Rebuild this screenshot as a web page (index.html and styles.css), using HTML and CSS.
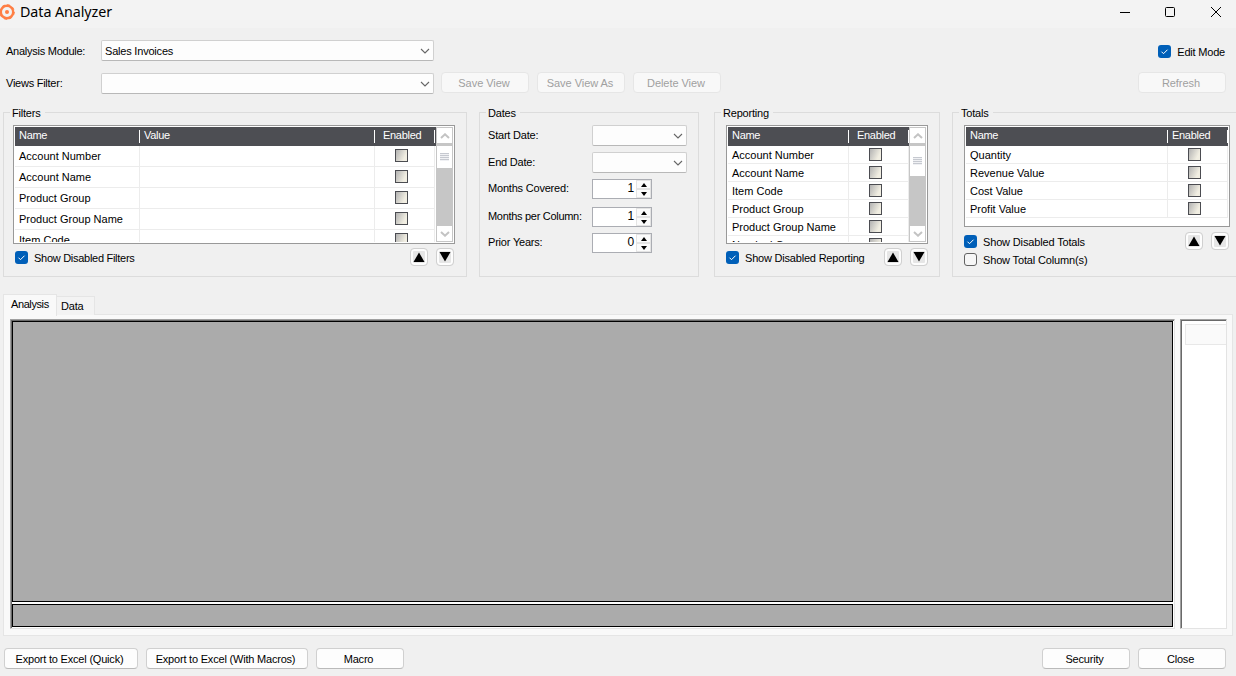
FILE: index.html
```html
<!DOCTYPE html>
<html lang="en">
<head>
    <meta charset="UTF-8">
    <meta name="viewport" content="width=device-width, initial-scale=1.0">
    <title>Data Analyzer</title>
    <link rel="stylesheet" href="styles.css">
</head>
<body>
    <svg class="defs" width="0" height="0">
      <symbol id="chevron" viewBox="0 0 10 6"><path d="M1 1l4 4 4-4" fill="none" stroke="#666" stroke-width="1.1"/></symbol>
      <symbol id="tick" viewBox="0 0 13 13"><path d="M3.5 6.7l2 2 4-4" fill="none" stroke="#fff" stroke-width="1"/></symbol>
      <symbol id="up" viewBox="0 0 12 10"><path d="M6 0.5L11.5 10H0.5z"/></symbol>
      <symbol id="down" viewBox="0 0 12 10"><path d="M0.5 0h11L6 9.5z"/></symbol>
      <symbol id="scroll-up" viewBox="0 0 10 6"><path d="M1 5l4-3.7L9 5" fill="none" stroke="#c3c3c3" stroke-width="2"/></symbol>
      <symbol id="scroll-down" viewBox="0 0 10 6"><path d="M1 1l4 3.7L9 1" fill="none" stroke="#c3c3c3" stroke-width="2"/></symbol>
      <symbol id="spin-up" viewBox="0 0 6 4"><path d="M3 0l3 4H0z"/></symbol>
      <symbol id="spin-down" viewBox="0 0 6 4"><path d="M0 0h6L3 4z"/></symbol>
    </svg>

    <header class="titlebar">
      <svg class="logo" width="15" height="16" viewBox="0 0 15 16">
        <circle cx="7" cy="8" r="6.2" fill="none" stroke="#ff7f45" stroke-width="2.4"/>
        <circle cx="7" cy="8" r="7.3" fill="none" stroke="#ff7f45" stroke-width="1" stroke-dasharray="2.9 2.83"/>
        <circle cx="7" cy="8" r="2" fill="#ff7f45"/>
      </svg>
      <h1>Data Analyzer</h1>
      <svg class="window-buttons" width="104" height="12" viewBox="0 0 104 12" fill="none" stroke="#000" stroke-width="1">
        <path d="M1 6.5h10"/>
        <rect x="46.5" y="1.5" width="9" height="9" rx="1"/>
        <path d="M92 1l10 10M102 1L92 11"/>
      </svg>
    </header>

    <div class="toolbar">
      <div class="toolbar-row">
        <span class="toolbar-label">Analysis Module:</span>
        <div class="combo combo-wide"><span>Sales Invoices</span><svg width="10" height="6"><use href="#chevron"/></svg></div>
        <div class="check edit-mode"><i class="box on"><svg width="13" height="13"><use href="#tick"/></svg></i><span>Edit Mode</span></div>
      </div>
      <div class="toolbar-row second">
        <span class="toolbar-label">Views Filter:</span>
        <div class="combo combo-wide"><span></span><svg width="10" height="6"><use href="#chevron"/></svg></div>
        <div class="view-buttons">
          <button class="btn" disabled>Save View</button>
          <button class="btn" disabled>Save View As</button>
          <button class="btn" disabled>Delete View</button>
        </div>
        <button class="btn refresh" disabled>Refresh</button>
      </div>
    </div>

    <div class="groups">
      <fieldset class="group filters">
        <legend>Filters</legend>
        <div class="grid tall">
          <div class="table">
            <div class="row head"><span>Name</span><span>Value</span><span>Enabled</span></div>
            <div class="row"><span>Account Number</span><span></span><span><i></i></span></div>
            <div class="row"><span>Account Name</span><span></span><span><i></i></span></div>
            <div class="row"><span>Product Group</span><span></span><span><i></i></span></div>
            <div class="row"><span>Product Group Name</span><span></span><span><i></i></span></div>
            <div class="row"><span>Item Code</span><span></span><span><i></i></span></div>
          </div>
          <div class="scrollbar">
            <div class="scroll-btn"><svg width="10" height="6"><use href="#scroll-up"/></svg></div>
            <div class="thumb"><b></b></div>
            <div class="scroll-btn bottom"><svg width="10" height="6"><use href="#scroll-down"/></svg></div>
          </div>
        </div>
        <div class="group-foot">
          <div class="check"><i class="box on"><svg width="13" height="13"><use href="#tick"/></svg></i><span>Show Disabled Filters</span></div>
          <div class="arrows"><button class="arrow"><svg width="12" height="10"><use href="#up"/></svg></button><button class="arrow"><svg width="12" height="10"><use href="#down"/></svg></button></div>
        </div>
      </fieldset>

      <fieldset class="group dates">
        <legend>Dates</legend>
        <div class="date-row"><label>Start Date:</label><div class="combo"><span></span><svg width="10" height="6"><use href="#chevron"/></svg></div></div>
        <div class="date-row end"><label>End Date:</label><div class="combo"><span></span><svg width="10" height="6"><use href="#chevron"/></svg></div></div>
        <div class="date-row covered"><label>Months Covered:</label><div class="spinner"><span>1</span><div class="spin"><b><svg width="6" height="4"><use href="#spin-up"/></svg></b><b><svg width="6" height="4"><use href="#spin-down"/></svg></b></div></div></div>
        <div class="date-row column"><label>Months per Column:</label><div class="spinner"><span>1</span><div class="spin"><b><svg width="6" height="4"><use href="#spin-up"/></svg></b><b><svg width="6" height="4"><use href="#spin-down"/></svg></b></div></div></div>
        <div class="date-row years"><label>Prior Years:</label><div class="spinner"><span>0</span><div class="spin"><b><svg width="6" height="4"><use href="#spin-up"/></svg></b><b><svg width="6" height="4"><use href="#spin-down"/></svg></b></div></div></div>
      </fieldset>

      <fieldset class="group reporting">
        <legend>Reporting</legend>
        <div class="grid tall">
          <div class="table">
            <div class="row head"><span>Name</span><span>Enabled</span></div>
            <div class="row"><span>Account Number</span><span><i></i></span></div>
            <div class="row"><span>Account Name</span><span><i></i></span></div>
            <div class="row"><span>Item Code</span><span><i></i></span></div>
            <div class="row"><span>Product Group</span><span><i></i></span></div>
            <div class="row"><span>Product Group Name</span><span><i></i></span></div>
            <div class="row"><span>Nominal Group</span><span><i></i></span></div>
          </div>
          <div class="scrollbar">
            <div class="scroll-btn"><svg width="10" height="6"><use href="#scroll-up"/></svg></div>
            <div class="thumb"><b></b></div>
            <div class="scroll-btn bottom"><svg width="10" height="6"><use href="#scroll-down"/></svg></div>
          </div>
        </div>
        <div class="group-foot">
          <div class="check"><i class="box on"><svg width="13" height="13"><use href="#tick"/></svg></i><span>Show Disabled Reporting</span></div>
          <div class="arrows"><button class="arrow"><svg width="12" height="10"><use href="#up"/></svg></button><button class="arrow"><svg width="12" height="10"><use href="#down"/></svg></button></div>
        </div>
      </fieldset>

      <fieldset class="group totals">
        <legend>Totals</legend>
        <div class="grid">
          <div class="table">
            <div class="row head"><span>Name</span><span>Enabled</span></div>
            <div class="row"><span>Quantity</span><span><i></i></span></div>
            <div class="row"><span>Revenue Value</span><span><i></i></span></div>
            <div class="row"><span>Cost Value</span><span><i></i></span></div>
            <div class="row"><span>Profit Value</span><span><i></i></span></div>
          </div>
        </div>
        <div class="group-foot">
          <div class="checks">
            <div class="check"><i class="box on"><svg width="13" height="13"><use href="#tick"/></svg></i><span>Show Disabled Totals</span></div>
            <div class="check"><i class="box"></i><span>Show Total Column(s)</span></div>
          </div>
          <div class="arrows"><button class="arrow"><svg width="12" height="10"><use href="#up"/></svg></button><button class="arrow"><svg width="12" height="10"><use href="#down"/></svg></button></div>
        </div>
      </fieldset>
    </div>

    <div class="tabs">
      <div class="tab active">Analysis</div>
      <div class="tab">Data</div>
    </div>
    <div class="panel">
      <div class="sunken analysis">
        <div class="pane main"></div>
        <div class="pane total"></div>
      </div>
      <div class="sunken side"><div class="side-head"></div></div>
    </div>

    <footer class="footer">
      <button class="btn quick">Export to Excel (Quick)</button>
      <button class="btn macros">Export to Excel (With Macros)</button>
      <button class="btn">Macro</button>
      <button class="btn security">Security</button>
      <button class="btn">Close</button>
    </footer>
</body>
</html>
```
FILE: styles.css
```css
* {
  margin: 0;
  padding: 0;
  box-sizing: border-box;
}
body {
  width: 1236px;
  height: 676px;
  overflow: hidden;
  background: #f0f0f0;
  color: #000;
  font-family: "Liberation Sans", Arial, sans-serif;
  font-size: 11px;
  line-height: 13px;
  letter-spacing: -0.2px;
  white-space: nowrap;
}
svg {
  display: block;
  flex: none;
}
.defs {
  position: absolute;
}
.titlebar {
  display: flex;
  align-items: center;
  height: 28px;
  padding: 0 13px 4px 0;
  background: #f3f3f3;
}
.titlebar h1 {
  margin-left: 5px;
  font: 14.3px/20px "Noto Sans", sans-serif;
  letter-spacing: -0.08px;
}
.window-buttons {
  margin-left: auto;
}
/* toolbar */
.toolbar {
  height: 78px;
  padding: 12px 10px 0 6px;
}
.toolbar-row {
  display: flex;
  align-items: center;
  height: 21px;
}
.toolbar-row.second {
  margin-top: 12px;
}
.toolbar-label {
  width: 95px;
  padding-top: 1px;
  letter-spacing: -0.25px;
}
.second .toolbar-label {
  padding: 0 0 1px;
}
.combo {
  display: flex;
  align-items: center;
  justify-content: space-between;
  width: 95px;
  height: 21px;
  padding: 0 3px;
  background: #fdfdfd;
  border: 1px solid #d0d0d0;
  border-bottom-color: #b8b8b8;
  border-radius: 2px;
}
.combo span {
  padding-top: 1px;
}
.combo-wide {
  width: 333px;
}
.check {
  display: flex;
  align-items: center;
  gap: 6px;
  height: 18px;
}
.check span {
  padding-top: 1px;
}
.edit-mode {
  margin-left: auto;
  margin-right: 1px;
  padding-top: 2px;
}
.box {
  width: 13px;
  height: 13px;
  border: 1px solid #626262;
  border-radius: 3px;
  background: #f6f6f6;
}
.box.on {
  border: 0;
  background: #005fb8;
}
.btn {
  width: 88px;
  height: 21px;
  padding: 1px 3px 0 0;
  background: #fdfdfd;
  border: 1px solid #d0d0d0;
  border-bottom-color: #bababa;
  border-radius: 4px;
  font: inherit;
  letter-spacing: -0.2px;
  color: #000;
}
.btn:disabled {
  padding-right: 2px;
  background: #f8f8f8;
  border-color: #e6e6e6;
  color: #a0a0a0;
  letter-spacing: -0.05px;
}
.view-buttons {
  display: flex;
  gap: 8px;
  margin: -2px 0 0 7px;
}
.refresh {
  margin: -2px 0 0 auto;
}
/* group boxes */
.groups {
  display: grid;
  grid-template-columns: 464px 220px 226px 290px;
  column-gap: 12px;
  height: 171px;
  padding-left: 3px;
}
.reporting {
  margin-left: 3px;
  width: 226px;
}
.totals {
  margin-left: 3px;
}
.group {
  min-width: 0;
  height: 171px;
  border: 1px solid #dcdcdc;
  padding: 6px 11px 0 9px;
}
.group legend {
  height: 13px;
  margin-left: -3px;
  padding: 0 4px 0 2px;
  line-height: 15px;
}
.group.reporting {
  padding: 6px 11px 0 11px;
}
.group.totals {
  padding: 6px 8px 0 11px;
}
.reporting legend,
.totals legend {
  margin-left: -5px;
}
.grid {
  display: flex;
  height: 102px;
  padding: 1px;
  border: 1px solid #999;
  background: #fff;
}
.grid.tall {
  height: 119px;
}
.table {
  flex: 1;
  overflow: hidden;
}
.row {
  display: grid;
  grid-template-columns: 125px 235px 60px;
  height: 21px;
}
.row span {
  padding: 4px 0 0 4px;
  border-right: 1px solid #ececec;
  border-bottom: 1px solid #ececec;
  overflow: hidden;
  letter-spacing: 0;
}
.row i {
  display: block;
  width: 13px;
  height: 13px;
  margin: -1px 0 0 16px;
  border: 1px solid #4b4c51;
  background: linear-gradient(115deg, #b2b2b2, #f1eee2 75%);
}
.row.head {
  height: 19px;
  background: #4d4e53;
  color: #fff;
}
.row.head span {
  height: 13px;
  margin-top: 3px;
  padding-top: 0;
  border-bottom: 0;
  border-right-color: #fff;
  line-height: 11px;
  letter-spacing: -0.3px;
}
.row.head span:last-child {
  padding-left: 8px;
}
.reporting .row {
  grid-template-columns: 121px 60px;
  height: 18px;
}
.totals .row {
  grid-template-columns: 202px 60px;
  height: 18px;
}
.reporting .row.head,
.totals .row.head {
  height: 19px;
}
.reporting .row:not(.head) span,
.totals .row:not(.head) span {
  padding-top: 3px;
}
.totals .row.head span:last-child {
  padding-left: 4px;
}
.scrollbar {
  display: flex;
  flex-direction: column;
  width: 17px;
  padding: 1px;
  background: #c6c6c6;
}
.scroll-btn {
  display: flex;
  align-items: center;
  justify-content: center;
  height: 15px;
  background: #fff;
}
.scroll-btn.bottom {
  margin-top: auto;
}
.thumb {
  display: flex;
  align-items: center;
  justify-content: center;
  height: 22px;
  margin-top: 3px;
  background: #fff;
}
.thumb b {
  width: 9px;
  height: 8px;
  background: repeating-linear-gradient(#c6c9d0 0 1px, #f0f1f4 1px 2px);
}
.reporting .thumb {
  height: 30px;
}
.group-foot {
  display: flex;
  justify-content: space-between;
  padding: 4px 1px 0 2px;
}
.filters .check span {
  letter-spacing: -0.28px;
}
.group-foot .check {
  height: 19px;
}
.reporting .group-foot {
  padding-left: 0;
}
.reporting .arrows {
  margin-right: -1px;
}
.totals .group-foot {
  padding: 5px 1px 0 0;
}
.totals .group-foot .check {
  height: 18px;
}
.totals .check span {
  padding-top: 2px;
  letter-spacing: -0.15px;
}
.arrows {
  display: flex;
  gap: 8px;
}
.arrow {
  display: flex;
  align-items: center;
  justify-content: center;
  width: 18px;
  height: 18px;
  border: 1px solid #d0d0d0;
  border-radius: 4px;
  background: #e6e6e6;
  box-shadow: inset 0 0 0 2px #fdfdfd;
}
/* dates */
.group.dates {
  padding-left: 8px;
}
.dates legend {
  margin-left: -2px;
}
.date-row {
  display: grid;
  grid-template-columns: 104px auto;
  height: 27px;
}
.date-row label {
  padding-top: 4px;
}
.date-row.covered label,
.date-row.column label,
.date-row.years label {
  padding-top: 3px;
}
.date-row.covered {
  height: 28px;
}
.date-row.column {
  height: 26px;
}
.date-row.column label {
  letter-spacing: -0.3px;
}
.spinner {
  display: flex;
  justify-content: flex-end;
  width: 60px;
  height: 20px;
  border: 1px solid #abadb3;
  background: #fff;
}
.spinner > span {
  margin-right: 2px;
  padding-top: 2px;
  font-size: 12px;
}
.spin {
  width: 15px;
  height: 18px;
  background: #e4e4e4;
  padding: 1px;
}
.spin b {
  display: flex;
  align-items: center;
  justify-content: center;
  height: 7px;
  background: #fbfbfb;
}
.spin b + b {
  margin-top: 2px;
}
/* tabs */
.tabs {
  display: flex;
  align-items: flex-end;
  height: 38px;
  padding-left: 3px;
}
.tab {
  width: 38px;
  height: 19px;
  padding: 3px 0 0 4px;
  border: 1px solid #e5e5e5;
  border-bottom: 0;
  border-left: 0;
  background: #f3f3f3;
}
.tab.active {
  width: 54px;
  height: 22px;
  margin-bottom: -1px;
  padding: 3px 0 0 7px;
  border-left: 1px solid #e5e5e5;
  background: #f9f9f9;
  letter-spacing: -0.4px;
  position: relative;
}
.panel {
  display: flex;
  gap: 5px;
  width: 1230px;
  height: 322px;
  margin: -1px 0 0 3px;
  padding: 4px 5px 6px 6px;
  border: 1px solid #e5e5e5;
  background: #f9f9f9;
}
.sunken {
  border: 1px solid;
  border-color: #a0a0a0 #e3e3e3 #e3e3e3 #a0a0a0;
  background: #fff;
  box-shadow: inset 1px 1px 0 #696969;
}
.analysis {
  width: 1165px;
  padding: 1px;
}
.pane {
  width: 1161px;
  border: 1px solid #000;
  background: #ababab;
}
.pane.main {
  height: 281px;
  margin-bottom: 2px;
}
.pane.total {
  height: 23px;
}
.side {
  width: 47px;
  padding: 4px 0 0 4px;
}
.side-head {
  height: 21px;
  border: 1px solid #e8e8e8;
  border-right: 0;
  background: #fafafa;
}
.footer {
  display: flex;
  gap: 8px;
  padding: 12px 10px 0 4px;
}
.btn.quick {
  width: 134px;
}
.btn.macros {
  width: 162px;
}
.btn.security {
  margin-left: auto;
}
```
